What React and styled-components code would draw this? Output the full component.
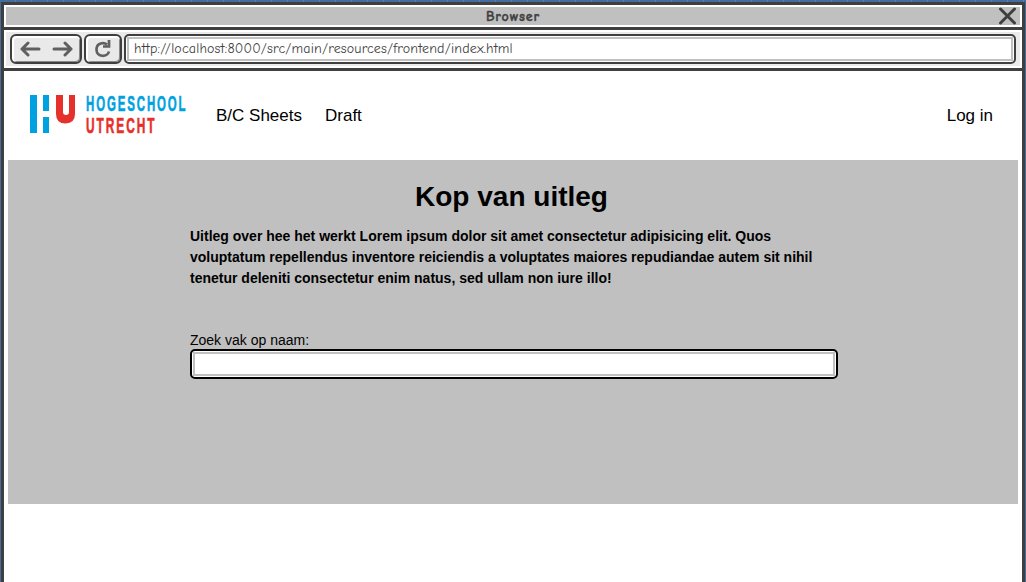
import React from "react";
import styled, { createGlobalStyle } from "styled-components";

const ink = "#3f3f3f";
const silver = "#c0c0c0";

const GlobalStyle = createGlobalStyle`
  * { box-sizing: border-box; }
  body { margin: 0; font-family: "Liberation Sans", Arial, sans-serif; color: #000; overflow: hidden; }
`;

const Desktop = styled.div`
  height: 582px;
  padding: 2px 1px 0;
  background-color: #456c9c;
  background-image: repeating-linear-gradient(90deg, transparent 0 15px, #5d80ab 15px 16px);
`;

const BrowserWindow = styled.div`
  height: 580px;
  display: flex;
  flex-direction: column;
  background: #fff;
  border: 3px solid ${ink};
  border-bottom: 0;
`;

const TitleBar = styled.header`
  height: 25px;
  flex: none;
  padding: 2px;
  border-bottom: 3px solid ${ink};
`;

const TitleFill = styled.div`
  height: 18px;
  display: grid;
  grid-template-columns: 22px 1fr 22px;
  align-items: start;
  background: ${silver};
`;

const WindowTitle = styled.div`
  grid-column: 2;
  text-align: center;
  font: bold 14px/18px "Comic Neue", "Comic Sans MS", Lato, sans-serif;
  letter-spacing: 0.8px;
  color: ${ink};
  -webkit-text-stroke: 0.35px ${ink};
  padding-top: 1px;
`;

const Toolbar = styled.div`
  height: 41px;
  flex: none;
  padding: 2px;
  border-bottom: 3px solid ${ink};
`;

const ToolbarFill = styled.div`
  height: 34px;
  display: flex;
  gap: 2px;
  padding: 2px 4px;
  background: #eaeaea;
`;

const ToolButton = styled.button`
  width: ${(p) => p.$width}px;
  height: 30px;
  display: flex;
  align-items: center;
  justify-content: center;
  gap: 11px;
  padding: 0;
  border: 2px solid ${ink};
  border-radius: 6px;
  background: #e9e9e9;
  box-shadow: inset 1px 1px 0 1px #fff, inset -1px -1px 0 #8a8a8a;
`;

const FieldFrame = styled.div`
  height: 30px;
  flex: 1;
  display: flex;
  padding: 1px;
  border: 2px solid ${(p) => p.$line};
  border-radius: 5px;
  background: #fff;
`;

const Field = styled.input`
  width: 100%;
  min-width: 0;
  padding: 0 6px 1px 5px;
  border: 2px solid ${silver};
  outline: 0;
  background: #fff;
  color: ${ink};
  font: 14px "Comic Neue", "Comic Sans MS", Lato, sans-serif;
  letter-spacing: ${(p) => p.$spacing || 0}px;
`;

const SiteHeader = styled.header`
  height: 89px;
  flex: none;
  display: flex;
  align-items: center;
  padding: 0 29px 0 25px;
`;

const Nav = styled.nav`
  flex: 1;
  display: flex;
  gap: 23px;
  margin-left: 25px;
`;

const NavLink = styled.a`
  font-size: 17px;
  line-height: 20px;
  color: #000;
`;

const Hero = styled.main`
  height: 344px;
  flex: none;
  margin: 0 4px;
  padding: 19px 180px 0 182px;
  background: ${silver};
`;

const Heading = styled.h1`
  margin: 0 5px 0 0;
  text-align: center;
  font-size: 28px;
  line-height: 36px;
`;

const Intro = styled.p`
  margin: 11px 0 0;
  font-size: 14px;
  line-height: 21px;
  font-weight: bold;
  white-space: nowrap;
`;

const SearchLabel = styled.label`
  display: block;
  margin-top: 43px;
  font-size: 14px;
  line-height: 17px;
`;

const LogoSvg = styled.svg`
  margin-bottom: 4px;
  overflow: visible;
`;

const LogoText = styled.text`
  font: bold 22px "Liberation Sans Narrow", "Liberation Sans", sans-serif;
  letter-spacing: 3.6px;
  stroke: currentColor;
  stroke-width: 0.6px;
`;

const Logo = () => (
  <LogoSvg width="162" height="44" viewBox="0 0 162 44" aria-label="Hogeschool Utrecht">
    <g fill="#00a1e1" color="#00a1e1">
      <path d="M1 3h7v38H1zM14 3h6v16h-6zM14 25h6v16h-6z" />
      <LogoText x="57" y="19" textLength="101.5" lengthAdjust="spacingAndGlyphs">HOGESCHOOL</LogoText>
    </g>
    <g fill="#e6302b" color="#e6302b">
      <path d="M27 3h7v17q0 3 3 3t3-3V3h6v19q0 9-9.500 9.500Q27 31.500 27 22z" />
      <LogoText x="57" y="41" textLength="70.5" lengthAdjust="spacingAndGlyphs">UTRECHT</LogoText>
    </g>
  </LogoSvg>
);

const Arrow = ({ forward }) => (
  <svg width="21" height="16" viewBox="0 0 21 16" fill="none" stroke="#606060" strokeWidth="3" strokeLinecap="round" strokeLinejoin="round">
    <path d={forward ? "M2 8h17M13 2l6 6-6 6" : "M19 8H2M8 2L2 8l6 6"} />
  </svg>
);

const Reload = () => (
  <svg width="18" height="18" viewBox="0 0 18 18" fill="none" stroke="#606060" strokeWidth="2.7">
    <path d="M13 4.500C10 2 2.500 2.500 2.500 9.500C2.500 17.500 13.500 17.500 15 11.500M15 0v6.500H9" />
  </svg>
);

const Close = () => (
  <svg width="18" height="18" viewBox="0 0 18 18" fill="none" stroke={ink} strokeWidth="3" strokeLinecap="round">
    <path d="M2.500 2l14 14M16.500 2l-14 14" />
  </svg>
);

export default function App() {
  return (
    <Desktop>
      <GlobalStyle />
      <BrowserWindow>
        <TitleBar>
          <TitleFill>
            <WindowTitle>Browser</WindowTitle>
            <Close />
          </TitleFill>
        </TitleBar>
        <Toolbar>
          <ToolbarFill>
            <ToolButton $width={72} aria-label="Back and forward"><Arrow /><Arrow forward /></ToolButton>
            <ToolButton $width={38} aria-label="Reload"><Reload /></ToolButton>
            <FieldFrame $line={ink}>
              <Field $spacing={0.16} aria-label="Address" defaultValue="http://localhost:8000/src/main/resources/frontend/index.html" />
            </FieldFrame>
          </ToolbarFill>
        </Toolbar>
        <SiteHeader>
          <Logo />
          <Nav>
            <NavLink>B/C Sheets</NavLink>
            <NavLink>Draft</NavLink>
          </Nav>
          <NavLink>Log in</NavLink>
        </SiteHeader>
        <Hero>
          <Heading>Kop van uitleg</Heading>
          <Intro>
            Uitleg over hee het werkt Lorem ipsum dolor sit amet consectetur adipisicing elit. Quos<br />
            voluptatum repellendus inventore reiciendis a voluptates maiores repudiandae autem sit nihil<br />
            tenetur deleniti consectetur enim natus, sed ullam non iure illo!
          </Intro>
          <SearchLabel htmlFor="course">Zoek vak op naam:</SearchLabel>
          <FieldFrame $line="#000"><Field id="course" /></FieldFrame>
        </Hero>
      </BrowserWindow>
    </Desktop>
  );
}
